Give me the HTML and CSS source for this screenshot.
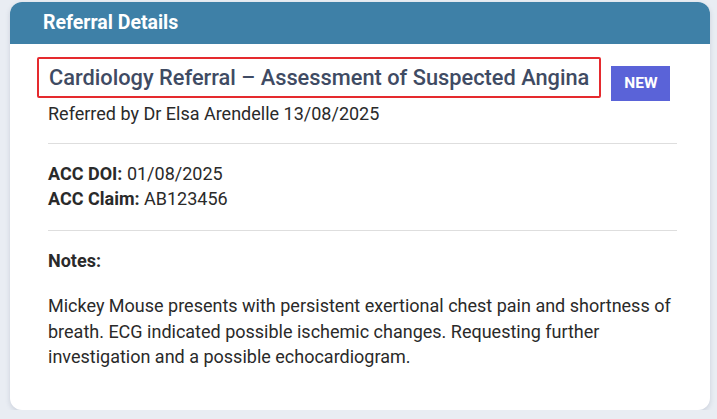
FILE: index.html
```html
<!DOCTYPE html>
<html>
<head>
<meta charset="utf-8">
<link rel="stylesheet" href="styles.css">
</head>
<body>
<div class="card">
  <div class="card-header">Referral Details</div>
  <div class="card-body">
    <div class="title-row">
      <h2 class="title">Cardiology Referral – Assessment of Suspected Angina</h2>
      <span class="badge">NEW</span>
    </div>
    <div class="referred">Referred by Dr Elsa Arendelle 13/08/2025</div>
    <div class="section">
      <div class="line"><b>ACC DOI:</b> 01/08/2025</div>
      <div class="line"><b>ACC Claim:</b> AB123456</div>
    </div>
    <div class="section notes">
      <div class="line"><b>Notes:</b></div>
      <p class="notes-text">Mickey Mouse presents with persistent exertional chest pain and shortness of breath. ECG indicated possible ischemic changes. Requesting further investigation and a possible echocardiogram.</p>
    </div>
  </div>
</div>
</body>
</html>
```

FILE: styles.css
```css
html, body {
  margin: 0;
  padding: 0;
}
body {
  background: #e9edf3;
  font-family: Roboto, "Liberation Sans", sans-serif;
  color: #222;
  padding: 2px 8px 0 10px;
}
.card {
  width: 700px;
  height: 408px;
  background: #fff;
  border-radius: 12px;
  overflow: hidden;
  box-shadow: 0 2px 5px rgba(60, 80, 110, 0.18);
  display: flex;
  flex-direction: column;
}
.card-header {
  height: 42px;
  line-height: 42px;
  background: #3e80a7;
  color: #fff;
  font-weight: 700;
  font-size: 19.5px;
  padding-left: 33px;
}
.card-body {
  padding: 13px 33px 0 38px;
}
.title-row {
  display: flex;
  align-items: flex-start;
  gap: 10px;
}
.title {
  margin: 0 0 0 -11px;
  border: 2px solid #e52a2e;
  border-radius: 2px;
  padding: 0 10px;
  height: 37px;
  line-height: 37px;
  font-size: 21.8px;
  font-weight: 500;
  color: #3f4b63;
  white-space: nowrap;
}
.badge {
  margin-top: 9px;
  width: 59px;
  height: 35px;
  line-height: 35px;
  text-align: center;
  background: #5a63d8;
  color: #fff;
  font-size: 15.5px;
  font-weight: 700;
}
.referred {
  margin-top: 1px;
  font-size: 18px;
  line-height: 24px;
  color: #2a2a2a;
  padding-bottom: 17px;
}
.section {
  border-top: 1px solid #dedede;
  padding: 17px 0 19px;
}
.line {
  font-size: 18px;
  line-height: 25px;
  color: #2a2a2a;
}
.line b {
  font-weight: 700;
}
.notes-text {
  margin: 20px 0 0;
  font-size: 18px;
  line-height: 25.5px;
  color: #2a2a2a;
}
```
